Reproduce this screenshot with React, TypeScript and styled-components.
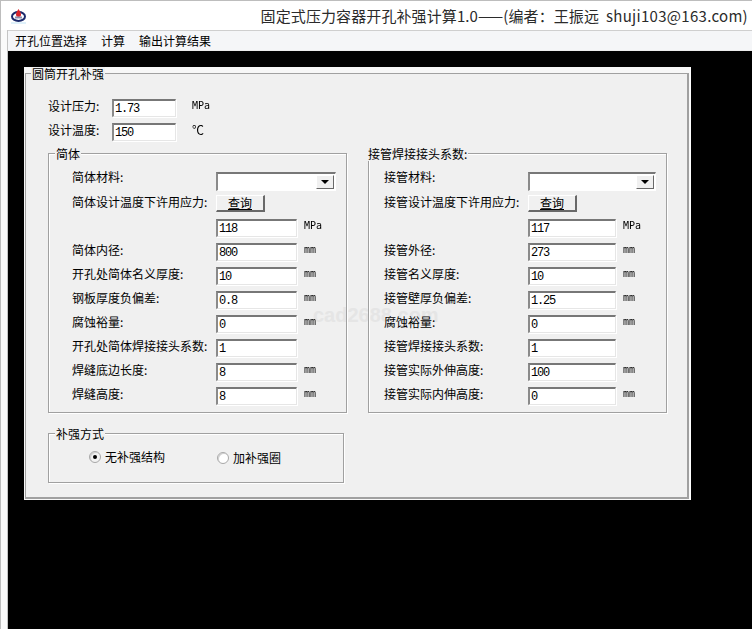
import styled, { createGlobalStyle } from "styled-components";

const GlobalStyle = createGlobalStyle`
  html, body {
    margin: 0;
    height: 100%;
    background: #fff;
    overflow: hidden;
  }
  #root {
    height: 100%;
  }
`;

const Window = styled.div`
  height: 629px;
  box-sizing: border-box;
  display: flex;
  flex-direction: column;
  border-top: 1px solid #bdbdbd;
  border-left: 1px solid #bdbdbd;
  background: #fafafa;
  font-family: "Noto Sans CJK SC", "Liberation Sans", sans-serif;
  font-size: 12px;
  color: #000;
`;

const TitleBar = styled.div`
  height: 29px;
  flex: none;
  display: flex;
  align-items: center;
  justify-content: space-between;
  padding: 0 4px 0 9px;
  background: #fff;
`;

const Title = styled.div`
  font-size: 15px;
  letter-spacing: 0.1px;
  line-height: 1;
  color: #2b2b2b;
  white-space: pre;
`;

const Email = styled.span`
  letter-spacing: 0.3px;
`;

const Content = styled.div`
  flex: 1;
  min-height: 0;
  display: flex;
  flex-direction: column;
  margin-left: 6px;
  border-left: 1px solid #c4c4c4;
`;

const MenuBar = styled.div`
  height: 19px;
  flex: none;
  display: flex;
  align-items: center;
  gap: 14px;
  padding-left: 7px;
  background: #f5f6f8;
  border-top: 1px solid #cfcfcf;
  border-bottom: 1px solid #ececec;
`;

const MenuItem = styled.span`
  line-height: 1;
`;

const Desktop = styled.div`
  flex: 1;
  min-height: 0;
  background: #000;
  padding: 16px 0 0 16px;
`;

const Panel = styled.div`
  width: 667px;
  height: 433px;
  box-sizing: border-box;
  padding: 6px 1px 1px 1px;
  background: #f7f7f7;
  border-right: 1px solid #fff;
`;

const Frame = styled.div`
  position: relative;
  height: 100%;
  box-sizing: border-box;
  padding: 25px 0 0 22px;
  background: #f0f0f0;
  border: 1px solid #a0a0a0;
  border-right-width: 2px;
  border-bottom-width: 2px;
`;

const Legend = styled.div<{ $left: number }>`
  position: absolute;
  top: -7px;
  left: ${(p) => p.$left}px;
  padding: 0 1px;
  background: #f0f0f0;
  line-height: 14px;
  white-space: nowrap;
`;

const Watermark = styled.div`
  position: absolute;
  left: 287px;
  top: 229px;
  font-family: "Liberation Sans", sans-serif;
  font-size: 20px;
  font-weight: 700;
  line-height: 24px;
  color: #e5e5e5;
`;

const TopRows = styled.div`
  display: flex;
  flex-direction: column;
  margin-bottom: 6px;
`;

const Columns = styled.div`
  display: grid;
  grid-template-columns: 299px 299px;
  column-gap: 21px;
  align-items: start;
`;

const Column = styled.div`
  display: flex;
  flex-direction: column;
  gap: 20px;
`;

const Group = styled.div<{ $width: number; $height: number; $indent?: number; $top?: number }>`
  position: relative;
  width: ${(p) => p.$width}px;
  height: ${(p) => p.$height}px;
  box-sizing: border-box;
  padding: ${(p) => p.$top ?? 18}px 0 0 ${(p) => p.$indent ?? 0}px;
  border: 1px solid #a0a0a0;
  box-shadow: 1px 1px 0 #fff, inset 1px 1px 0 #fff;
`;

const Row = styled.div<{ $height?: number; $labelWidth: number }>`
  display: grid;
  grid-template-columns: ${(p) => p.$labelWidth}px max-content max-content;
  height: ${(p) => p.$height ?? 24}px;
`;

const Label = styled.div`
  height: 18px;
  line-height: 14px;
  white-space: nowrap;
`;

const ComboLabel = styled(Label)`
  margin-top: -2px;
`;

const TextBox = styled.div<{ $width: number }>`
  width: ${(p) => p.$width}px;
  height: 18px;
  box-sizing: border-box;
  padding: 2px 0 0 1px;
  background: #fff;
  border-top: 2px solid #777;
  border-left: 2px solid #8a8a8a;
  box-shadow: 1px 1px 0 #fff;
  border-right: 1px solid #e6e6e6;
  border-bottom: 1px solid #e6e6e6;
  font-family: "Liberation Mono", monospace;
  font-size: 12px;
  letter-spacing: -1.2px;
  line-height: 12px;
  white-space: pre;
`;

const Unit = styled.div`
  margin-left: 7px;
  height: 14px;
  font-family: "DejaVu Sans Mono", monospace;
  font-size: 10px;
  line-height: 14px;
  will-change: transform;
`;

const Celsius = styled(Unit)`
  font-family: "Noto Sans CJK SC", sans-serif;
  font-size: 12px;
  margin-left: 16px;
`;

const TopUnit = styled(Unit)`
  margin-left: 16px;
`;

const Combo = styled.div<{ $width: number }>`
  width: ${(p) => p.$width}px;
  height: 19px;
  box-sizing: border-box;
  display: flex;
  justify-content: flex-end;
  padding: 1px;
  background: #fff;
  border-top: 2px solid #777;
  border-left: 2px solid #8a8a8a;
  border-right: 1px solid #fff;
  border-bottom: 1px solid #fff;
`;

const ComboButton = styled.div`
  width: 16px;
  display: flex;
  align-items: center;
  justify-content: center;
  background: #f0f0f0;
  border-top: 1px solid #fff;
  border-left: 1px solid #fff;
  border-right: 1px solid #696969;
  border-bottom: 1px solid #696969;
`;

const ComboArrow = styled.span`
  width: 0;
  height: 0;
  border-left: 4px solid transparent;
  border-right: 4px solid transparent;
  border-top: 4px solid #000;
`;

const QueryButton = styled.div`
  width: 49px;
  height: 17px;
  box-sizing: border-box;
  display: flex;
  align-items: center;
  justify-content: center;
  background: #f0f0f0;
  border-top: 1px solid #fff;
  border-left: 1px solid #fff;
  border-right: 2px solid #696969;
  border-bottom: 2px solid #696969;
  line-height: 14px;
  text-decoration: underline;
`;

const RadioRow = styled.div`
  display: flex;
  padding-left: 40px;
`;

const RadioItem = styled.div<{ $width: number; $drop?: number }>`
  width: ${(p) => p.$width}px;
  display: flex;
  align-items: center;
  gap: 4px;
  margin-top: ${(p) => p.$drop ?? 0}px;
  line-height: 14px;
  white-space: nowrap;
`;

const RadioDot = styled.span<{ $checked?: boolean }>`
  width: 12px;
  height: 12px;
  box-sizing: border-box;
  display: flex;
  align-items: center;
  justify-content: center;
  border-radius: 50%;
  background: ${(p) => (p.$checked ? "#f2f2f2" : "#fff")};
  border: 1px solid #a8a8a8;
  box-shadow: inset 1px 1px 0 #d0d0d0;

  &::after {
    content: "";
    width: 4px;
    height: 4px;
    border-radius: 50%;
    background: ${(p) => (p.$checked ? "#000" : "transparent")};
  }
`;

type FieldRow = {
  label: string;
  value: string;
  unit?: string;
};

type Section = {
  legend: string;
  legendLeft: number;
  material: string;
  stress: string;
  indent: number;
  boxWidth: number;
  comboWidth: number;
  rows: FieldRow[];
};

const sections: Section[] = [
  {
    legend: "简体",
    legendLeft: 6,
    material: "简体材料:",
    stress: "简体设计温度下许用应力:",
    indent: 23,
    boxWidth: 81,
    comboWidth: 120,
    rows: [
      { label: "", value: "118", unit: "MPa" },
      { label: "简体内径:", value: "800", unit: "mm" },
      { label: "开孔处简体名义厚度:", value: "10", unit: "mm" },
      { label: "钢板厚度负偏差:", value: "0.8", unit: "mm" },
      { label: "腐蚀裕量:", value: "0", unit: "mm" },
      { label: "开孔处简体焊接接头系数:", value: "1" },
      { label: "焊缝底边长度:", value: "8", unit: "mm" },
      { label: "焊缝高度:", value: "8", unit: "mm" },
    ],
  },
  {
    legend: "接管焊接接头系数:",
    legendLeft: -2,
    material: "接管材料:",
    stress: "接管设计温度下许用应力:",
    indent: 15,
    boxWidth: 88,
    comboWidth: 128,
    rows: [
      { label: "", value: "117", unit: "MPa" },
      { label: "接管外径:", value: "273", unit: "mm" },
      { label: "接管名义厚度:", value: "10", unit: "mm" },
      { label: "接管壁厚负偏差:", value: "1.25", unit: "mm" },
      { label: "腐蚀裕量:", value: "0", unit: "mm" },
      { label: "接管焊接接头系数:", value: "1" },
      { label: "接管实际外伸高度:", value: "100", unit: "mm" },
      { label: "接管实际内伸高度:", value: "0", unit: "mm" },
    ],
  },
];

function Logo() {
  return (
    <svg width="17" height="17" viewBox="0 0 17 17">
      <ellipse cx="8.5" cy="9.5" rx="6.5" ry="4.5" fill="none" stroke="#1c2a6b" strokeWidth="2" />
      <path d="M8.5 2 C10.5 5 11 6 11 7.5 A2.5 2.5 0 0 1 6 7.5 C6 6 6.5 5 8.5 2 Z" fill="#d8232a" />
      <rect x="5" y="9.5" width="7" height="2" fill="#8a90b0" />
      <rect x="1" y="15.5" width="15" height="1" fill="#bfe3f5" />
    </svg>
  );
}

function SectionGroup({ section }: { section: Section }) {
  return (
    <Group $width={299} $height={260} $indent={section.indent}>
      <Legend $left={section.legendLeft}>{section.legend}</Legend>
      <Row $labelWidth={144} $height={23}>
        <ComboLabel>{section.material}</ComboLabel>
        <Combo $width={section.comboWidth}>
          <ComboButton>
            <ComboArrow />
          </ComboButton>
        </Combo>
      </Row>
      <Row $labelWidth={144}>
        <Label>{section.stress}</Label>
        <QueryButton>查询</QueryButton>
      </Row>
      {section.rows.map((row) => (
        <Row $labelWidth={144} key={row.label + row.value}>
          <Label>{row.label}</Label>
          <TextBox $width={section.boxWidth}>{row.value}</TextBox>
          {row.unit && <Unit>{row.unit}</Unit>}
        </Row>
      ))}
    </Group>
  );
}

export default function App() {
  return (
    <>
      <GlobalStyle />
      <Window>
        <TitleBar>
          <Logo />
          <Title>
            固定式压力容器开孔补强计算1.0——(编者：王振远  <Email>shuji103@163.com)</Email>
          </Title>
        </TitleBar>
        <Content>
          <MenuBar>
            <MenuItem>开孔位置选择</MenuItem>
            <MenuItem>计算</MenuItem>
            <MenuItem>输出计算结果</MenuItem>
          </MenuBar>
          <Desktop>
            <Panel>
              <Frame>
                <Legend $left={5}>圆筒开孔补强</Legend>
                <Watermark>cad2688.com</Watermark>
                <TopRows>
                  <Row $labelWidth={64}>
                    <Label>设计压力:</Label>
                    <TextBox $width={64}>1.73</TextBox>
                    <TopUnit>MPa</TopUnit>
                  </Row>
                  <Row $labelWidth={64}>
                    <Label>设计温度:</Label>
                    <TextBox $width={64}>150</TextBox>
                    <Celsius>℃</Celsius>
                  </Row>
                </TopRows>
                <Columns>
                  <Column>
                    <SectionGroup section={sections[0]} />
                    <Group $width={296} $height={50} $top={15}>
                      <Legend $left={6}>补强方式</Legend>
                      <RadioRow>
                        <RadioItem $width={128}>
                          <RadioDot $checked />
                          无补强结构
                        </RadioItem>
                        <RadioItem $width={100} $drop={2}>
                          <RadioDot />
                          加补强圈
                        </RadioItem>
                      </RadioRow>
                    </Group>
                  </Column>
                  <SectionGroup section={sections[1]} />
                </Columns>
              </Frame>
            </Panel>
          </Desktop>
        </Content>
      </Window>
    </>
  );
}
